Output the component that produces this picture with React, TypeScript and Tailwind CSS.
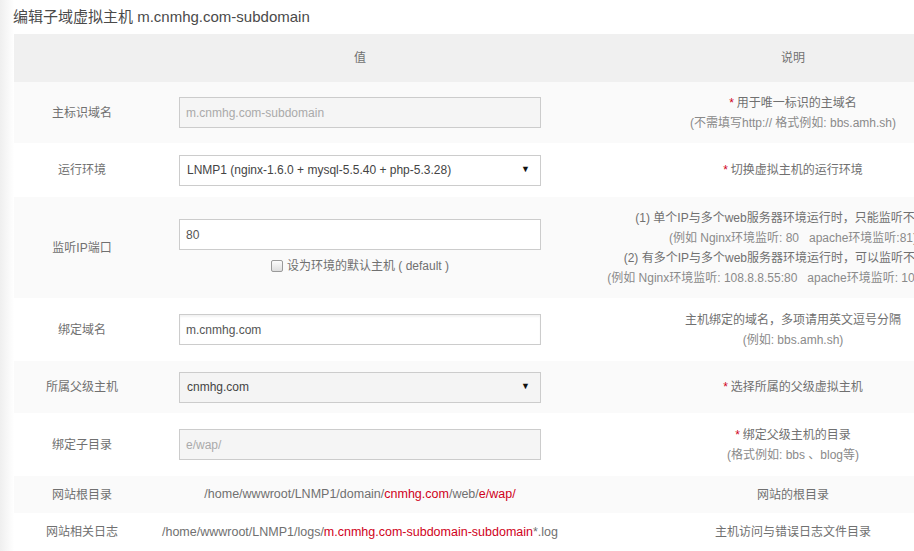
import React from "react";

const Star = () => <span className="text-[#d0021b] mr-[3px] text-[12px]">*</span>;

function Field({ value, disabled, white }: { value: string; disabled?: boolean; white?: boolean }) {
  return (
    <div
      className={
        "w-[362px] h-[31px] border border-[#cccccc] flex items-center px-[6px] text-[12px] " +
        (disabled ? "bg-[#f5f5f5] text-[#aaaaaa]" : white ? "bg-white text-[#555555] shadow-[inset_0_2px_2px_rgba(0,0,0,0.05)]" : "bg-white text-[#555555]")
      }
    >
      {value}
    </div>
  );
}

function Select({ value, gray }: { value: string; gray?: boolean }) {
  return (
    <div
      className={
        "w-[362px] h-[31px] border border-[#cccccc] flex items-center justify-between pl-[7px] pr-[10px] text-[12px] text-[#444444] " +
        (gray ? "bg-[#f4f4f4]" : "bg-white")
      }
    >
      <span>{value}</span>
      <span className="text-[9px] text-[#111111]">▼</span>
    </div>
  );
}

function Row({
  label,
  h,
  bg,
  value,
  desc,
}: {
  label: React.ReactNode;
  h: string;
  bg: string;
  value: React.ReactNode;
  desc: React.ReactNode;
}) {
  return (
    <div className={"grid grid-cols-[136px_420px_446px] items-center " + h + " " + bg}>
      <div className="text-center text-[12px] text-[#707070]">{label}</div>
      <div className="flex flex-col items-center">{value}</div>
      <div className="text-center text-[12px] leading-[20px] text-[#707070]">{desc}</div>
    </div>
  );
}

export default function App() {
  return (
    <div className="w-[914px] h-[551px] overflow-hidden bg-white font-['Liberation_Sans','Noto_Sans_CJK_SC',sans-serif] flex">
      <div className="w-[14px] shrink-0 bg-gradient-to-r from-[#efefef] to-white" />
      <div className="flex flex-col shrink-0">
        <div className="h-[34px] flex items-center text-[15px] text-[#4a4a4a] -ml-[1px]">
          编辑子域虚拟主机 m.cnmhg.com-subdomain
        </div>
        <div className="w-[1002px]">
          <div className="grid grid-cols-[136px_420px_446px] items-center h-[48px] bg-[#f0f0f0] text-[12px] text-[#707070]">
            <div />
            <div className="text-center">值</div>
            <div className="text-center">说明</div>
          </div>
          <Row
            label="主标识域名"
            h="h-[61px]"
            bg="bg-[#fafafa]"
            value={<Field value="m.cnmhg.com-subdomain" disabled />}
            desc={
              <>
                <div>
                  <Star />用于唯一标识的主域名
                </div>
                <div className="text-[#8a8a8a]">(不需填写http:// 格式例如: bbs.amh.sh)</div>
              </>
            }
          />
          <Row
            label="运行环境"
            h="h-[54px]"
            bg="bg-white"
            value={<Select value="LNMP1 (nginx-1.6.0 + mysql-5.5.40 + php-5.3.28)" />}
            desc={
              <div>
                <Star />切换虚拟主机的运行环境
              </div>
            }
          />
          <Row
            label="监听IP端口"
            h="h-[101px]"
            bg="bg-[#fafafa]"
            value={
              <>
                <Field value="80" />
                <div className="mt-[6px] h-[20px] flex items-center text-[12px] text-[#707070]">
                  <span className="w-[12px] h-[12px] border border-[#9a9a9a] rounded-[2px] bg-gradient-to-b from-[#fcfcfc] to-[#dedede] mr-[4px]" />
                  设为环境的默认主机 ( default )
                </div>
              </>
            }
            desc={
              <div className="whitespace-nowrap">
                <div>(1) 单个IP与多个web服务器环境运行时，只能监听不同端口</div>
                <div className="text-[#8a8a8a]">(例如 Nginx环境监听: 80&nbsp;&nbsp; apache环境监听:81)</div>
                <div>(2) 有多个IP与多个web服务器环境运行时，可以监听不同IP端口</div>
                <div className="text-[#8a8a8a]">(例如 Nginx环境监听: 108.8.8.55:80&nbsp;&nbsp; apache环境监听: 108.8.8.56:80)</div>
              </div>
            }
          />
          <Row
            label="绑定域名"
            h="h-[63px]"
            bg="bg-white"
            value={<Field value="m.cnmhg.com" white />}
            desc={
              <>
                <div>主机绑定的域名，多项请用英文逗号分隔</div>
                <div className="text-[#8a8a8a]">(例如: bbs.amh.sh)</div>
              </>
            }
          />
          <Row
            label="所属父级主机"
            h="h-[52px]"
            bg="bg-[#fafafa]"
            value={<Select value="cnmhg.com" gray />}
            desc={
              <div>
                <Star />选择所属的父级虚拟主机
              </div>
            }
          />
          <Row
            label="绑定子目录"
            h="h-[63px]"
            bg="bg-white"
            value={<Field value="e/wap/" disabled />}
            desc={
              <>
                <div>
                  <Star />绑定父级主机的目录
                </div>
                <div className="text-[#8a8a8a]">(格式例如: bbs 、blog等)</div>
              </>
            }
          />
          <Row
            label="网站根目录"
            h="h-[37px]"
            bg="bg-[#fafafa]"
            value={
              <div className="text-[12.5px] text-[#707070] whitespace-nowrap">
                /home/wwwroot/LNMP1/domain/<span className="text-[#d0021b]">cnmhg.com</span>/web/
                <span className="text-[#d0021b]">e/wap/</span>
              </div>
            }
            desc={<div>网站的根目录</div>}
          />
          <Row
            label="网站相关日志"
            h="h-[38px]"
            bg="bg-white"
            value={
              <div className="text-[12.5px] text-[#707070] whitespace-nowrap">
                /home/wwwroot/LNMP1/logs/<span className="text-[#d0021b]">m.cnmhg.com-subdomain-subdomain</span>*.log
              </div>
            }
            desc={<div>主机访问与错误日志文件目录</div>}
          />
        </div>
      </div>
    </div>
  );
}
